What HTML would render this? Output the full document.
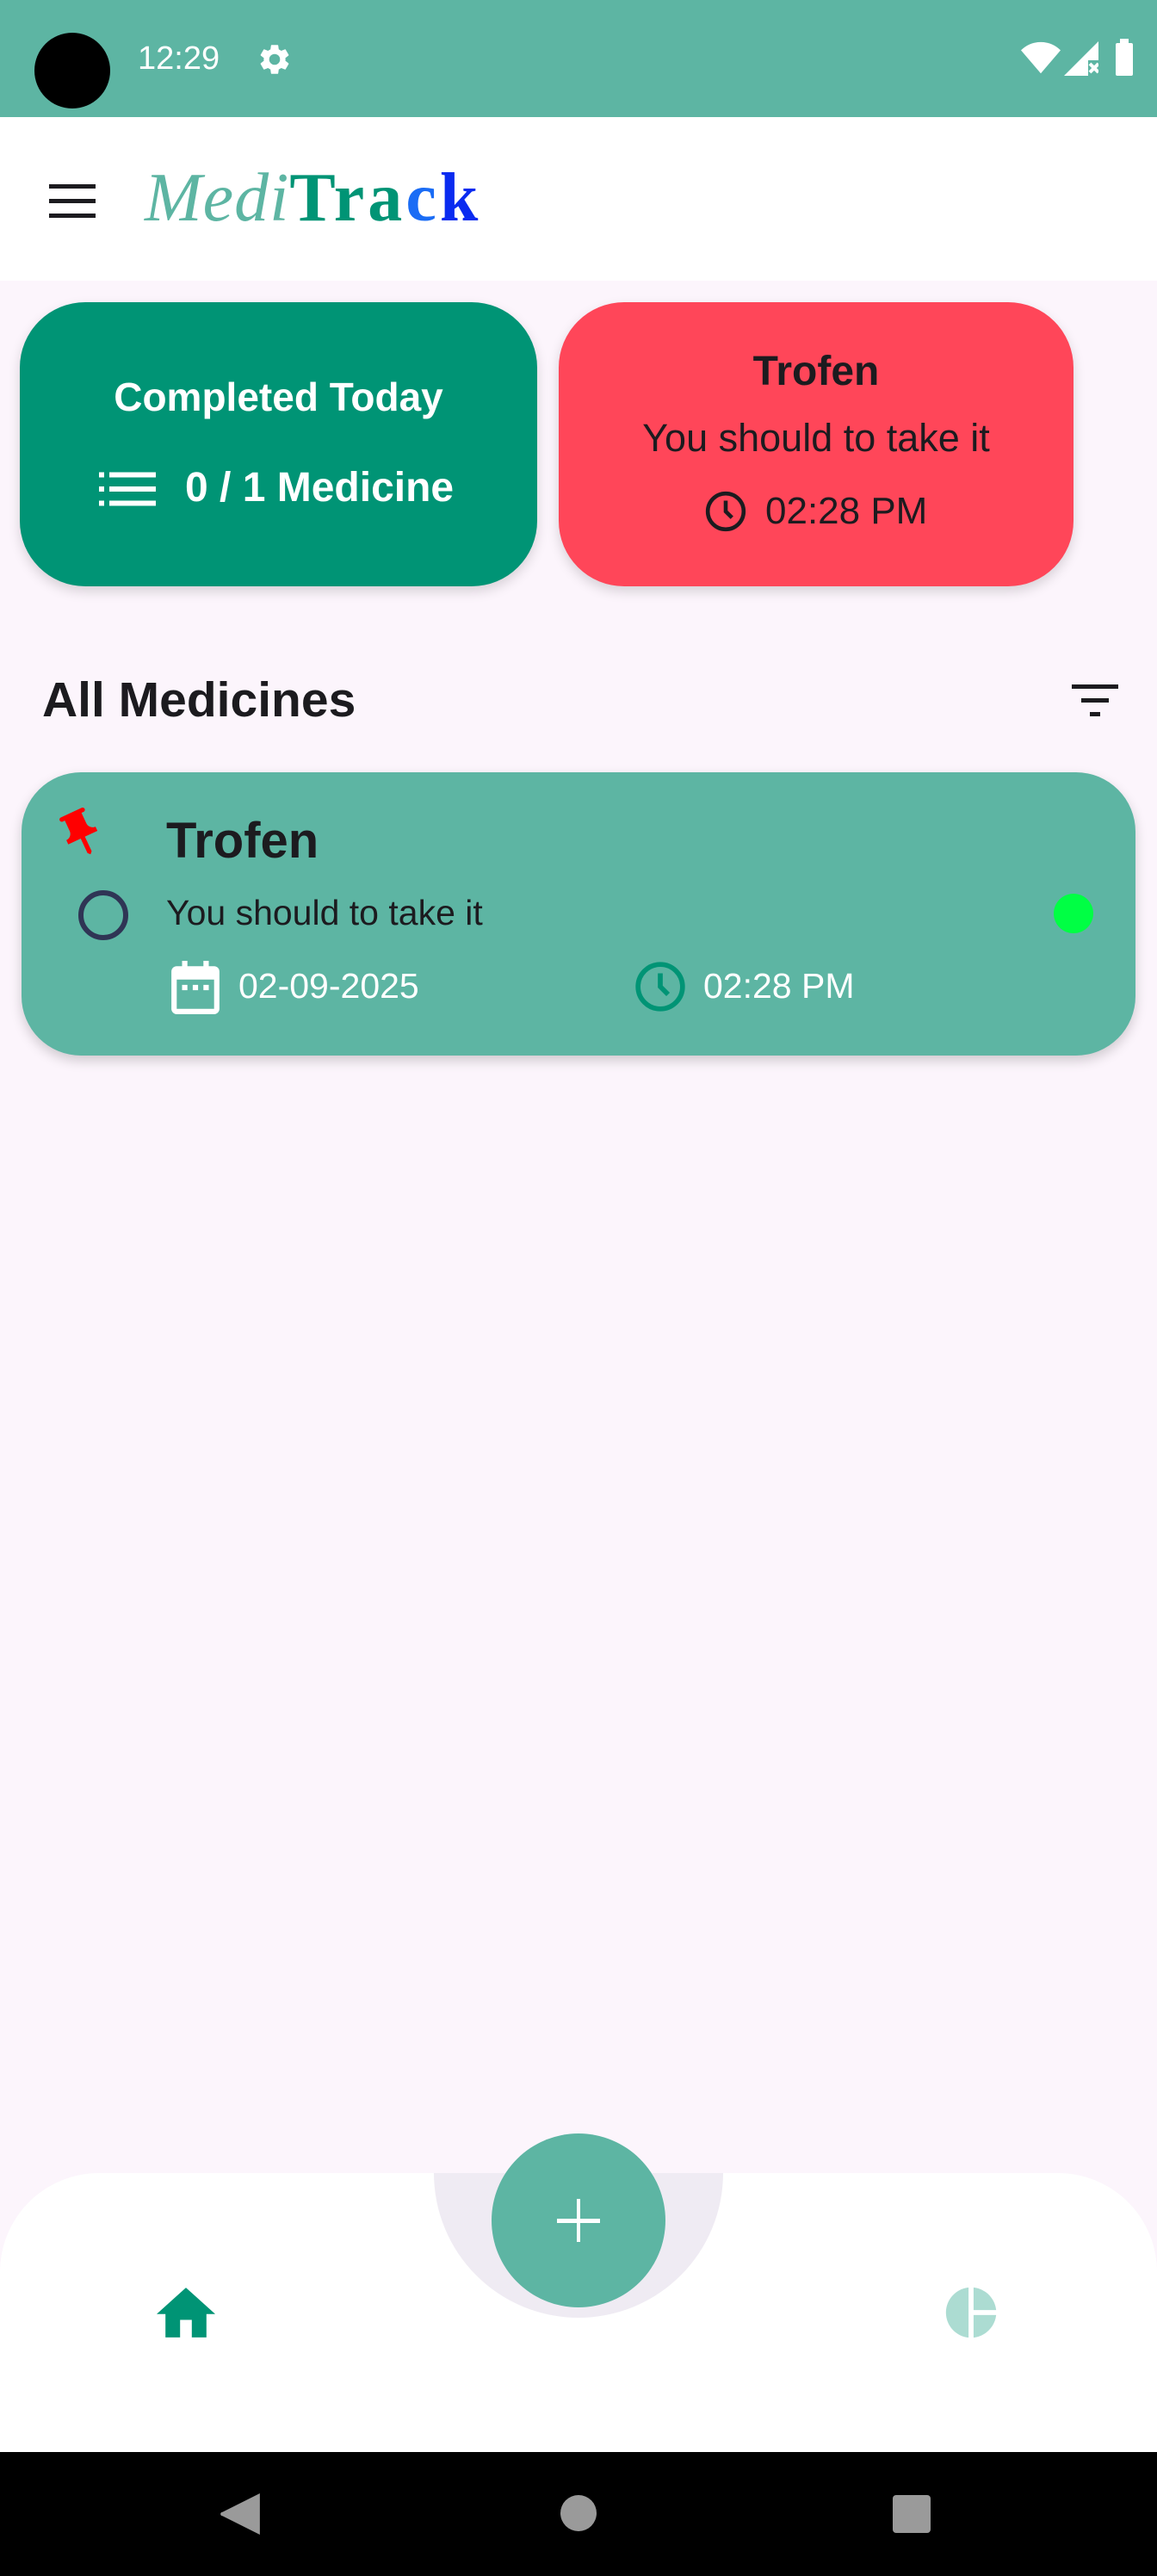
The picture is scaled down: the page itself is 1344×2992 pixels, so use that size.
<!DOCTYPE html>
<html><head><meta charset="utf-8"><style>
*{margin:0;padding:0;box-sizing:border-box}
body{width:1344px;height:2992px;position:relative;background:#fcf5fc;font-family:"Liberation Sans",Roboto,sans-serif;overflow:hidden}
.a{position:absolute}
.t{white-space:nowrap;line-height:1}
</style></head><body>
<!-- status bar -->
<div class="a" style="left:0;top:0;width:1344px;height:136px;background:#5db5a3"></div>
<div class="a" style="left:40px;top:38px;width:88px;height:88px;border-radius:50%;background:#000"></div>
<div class="a t" style="left:160px;top:49px;font-size:38px;color:#fff">12:29</div>
<svg class="a" style="left:298px;top:48px" width="42" height="42" viewBox="0 0 24 24"><path fill="#fff" d="M19.14 12.94c.04-.3.06-.61.06-.94s-.02-.64-.07-.94l2.030-1.58a.49.49 0 0 0 .12-.61l-1.92-3.32a.49.49 0 0 0-.59-.22l-2.39.96c-.5-.38-1.03-.7-1.62-.94L14.4 2.81a.48.48 0 0 0-.48-.41h-3.84a.48.48 0 0 0-.47.41l-.36 2.540c-.59.24-1.13.57-1.620.94l-2.39-.96a.48.48 0 0 0-.59.22L2.74 8.87a.47.47 0 0 0 .12.61l2.03 1.58c-.05.3-.09.63-.09.94s.02.64.07.94l-2.03 1.58a.49.49 0 0 0-.12.61l1.92 3.32c.12.22.37.29.59.22l2.39-.96c.5.38 1.03.7 1.62.94l.36 2.54c.05.24.24.41.48.41h3.84c.24 0 .44-.17.47-.41l.36-2.54c.59-.24 1.13-.56 1.62-.94l2.39.96c.22.08.47 0 .59-.22l1.92-3.32a.47.47 0 0 0-.12-.61l-2.010-1.58zM12 15.6A3.6 3.6 0 1 1 12 8.4a3.6 3.6 0 0 1 0 7.2z"/></svg>
<svg class="a" style="left:1186px;top:48px" width="46" height="40" viewBox="0 0 24 20"><path fill="#fff" d="M12 19 0 5C3 2 7 0 12 0s9 2 12 5z"/></svg>
<svg class="a" style="left:1236px;top:48px" width="40" height="40" viewBox="0 0 20 20"><path fill="#fff" d="M20 0v11h-6v9H0z"/><path stroke="#fff" stroke-width="2" d="M15 13l5 5M20 13l-5 5"/></svg>
<div class="a" style="left:1296px;top:50px;width:20px;height:38px;background:#fff;border-radius:2px"></div>
<div class="a" style="left:1301px;top:45px;width:10px;height:6px;background:#fff"></div>
<!-- header -->
<div class="a" style="left:0;top:136px;width:1344px;height:190px;background:#fff"></div>
<div class="a" style="left:57px;top:214px;width:54px;height:5px;background:#1c1b1f"></div>
<div class="a" style="left:57px;top:231px;width:54px;height:5px;background:#1c1b1f"></div>
<div class="a" style="left:57px;top:248px;width:54px;height:5px;background:#1c1b1f"></div>
<div class="a t" style="left:168px;top:190px;font-size:80px;font-family:'Liberation Serif',serif;letter-spacing:1px"><span style="font-style:italic;color:#5db5a3">Medi</span><span style="font-weight:bold;color:#009475;letter-spacing:4px">Tra</span><span style="font-weight:bold;color:#1a6cf5;letter-spacing:4px">c</span><span style="font-weight:bold;color:#0a2bf0">k</span></div>
<!-- card 1 -->
<div class="a" style="left:23px;top:351px;width:601px;height:330px;border-radius:76px;background:#009475;box-shadow:0 6px 14px rgba(0,0,0,.15)"></div>
<div class="a t" style="left:23px;width:601px;top:438px;text-align:center;font-size:46px;font-weight:bold;color:#fff">Completed Today</div>
<svg class="a" style="left:115px;top:548px" width="66" height="40" viewBox="0 0 22 13"><g fill="#fff"><rect x="0" y="0" width="2" height="2"/><rect x="0" y="5.5" width="2" height="2"/><rect x="0" y="11" width="2" height="2"/><rect x="4" y="0" width="18" height="2"/><rect x="4" y="5.5" width="18" height="2"/><rect x="4" y="11" width="18" height="2"/></g></svg>
<div class="a t" style="left:215px;top:543px;font-size:48px;font-weight:bold;color:#fff">0 / 1 Medicine</div>
<!-- card 2 -->
<div class="a" style="left:649px;top:351px;width:598px;height:330px;border-radius:76px;background:#ff4659;box-shadow:0 6px 14px rgba(0,0,0,.15)"></div>
<div class="a t" style="left:649px;width:598px;top:408px;text-align:center;font-size:48px;font-weight:bold;color:#1c1b1f">Trofen</div>
<div class="a t" style="left:649px;width:598px;top:486px;text-align:center;font-size:45px;color:#1c1b1f">You should to take it</div>
<svg class="a" style="left:818px;top:569px" width="50" height="50" viewBox="0 0 24 24"><circle cx="12" cy="12" r="10" fill="none" stroke="#1c1b1f" stroke-width="2.2"/><path d="M12 6v6l3.5 3.5" fill="none" stroke="#1c1b1f" stroke-width="2.2"/></svg>
<div class="a t" style="left:889px;top:572px;font-size:44px;color:#1c1b1f">02:28 PM</div>
<!-- All medicines -->
<div class="a t" style="left:49px;top:785px;font-size:57px;font-weight:bold;color:#1c1b1f">All Medicines</div>
<div class="a" style="left:1245px;top:795px;width:54px;height:5px;background:#1c1b1f"></div>
<div class="a" style="left:1256px;top:811px;width:32px;height:5px;background:#1c1b1f"></div>
<div class="a" style="left:1266px;top:827px;width:12px;height:5px;background:#1c1b1f"></div>
<!-- list card -->
<div class="a" style="left:25px;top:897px;width:1294px;height:329px;border-radius:69px;background:#5db5a3;box-shadow:0 6px 14px rgba(0,0,0,.18)"></div>
<svg class="a" style="left:62px;top:936px" width="64" height="64" viewBox="0 0 24 24"><g transform="rotate(-25 12 12)"><path fill="#f00" d="M16 9V4h1c.55 0 1-.45 1-1s-.45-1-1-1H7c-.55 0-1 .45-1 1s.45 1 1 1h1v5c0 1.66-1.34 3-3 3v2h5.97v7l1 1 1-1v-7H19v-2c-1.66 0-3-1.34-3-3z"/></g></svg>
<div class="a t" style="left:193px;top:948px;font-size:58px;font-weight:bold;color:#1c1b1f">Trofen</div>
<div class="a" style="left:91px;top:1034px;width:58px;height:58px;border-radius:50%;border:6px solid #2f3555"></div>
<div class="a t" style="left:193px;top:1040px;font-size:41px;color:#1c1b1f">You should to take it</div>
<div class="a" style="left:1224px;top:1038px;width:46px;height:46px;border-radius:50%;background:#00ff44"></div>
<svg class="a" style="left:199px;top:1116px" width="56" height="62" viewBox="0 0 18 20"><path fill="#fff" d="M4 0h2v2h6V0h2v2h2a2 2 0 0 1 2 2v14a2 2 0 0 1-2 2H2a2 2 0 0 1-2-2V4a2 2 0 0 1 2-2h2zM2 7v11h14V7z"/><rect fill="#fff" x="4" y="9" width="2" height="2"/><rect fill="#fff" x="8" y="9" width="2" height="2"/><rect fill="#fff" x="12" y="9" width="2" height="2"/></svg>
<div class="a t" style="left:277px;top:1125px;font-size:41px;color:#fff">02-09-2025</div>
<svg class="a" style="left:736px;top:1115px" width="62" height="62" viewBox="0 0 24 24"><circle cx="12" cy="12" r="10" fill="none" stroke="#009475" stroke-width="2.2"/><path d="M12 6v6l3.5 3.5" fill="none" stroke="#009475" stroke-width="2.2"/></svg>
<div class="a t" style="left:817px;top:1125px;font-size:41px;color:#fff">02:28 PM</div>
<!-- bottom nav -->
<div class="a" style="left:0;top:2524px;width:1344px;height:330px;background:#fff;border-radius:115px 115px 0 0"></div>
<div class="a" style="left:504px;top:2524px;width:336px;height:168px;background:#efebf3;border-radius:0 0 168px 168px"></div>
<div class="a" style="left:571px;top:2478px;width:202px;height:202px;border-radius:50%;background:#5db5a3"></div>
<div class="a" style="left:647px;top:2577px;width:50px;height:5px;background:#fff"></div>
<div class="a" style="left:670px;top:2554px;width:4px;height:50px;background:#fff"></div>
<svg class="a" style="left:182px;top:2656px" width="68" height="60" viewBox="0 0 20 17"><path fill="#009475" d="M10 0 0 9h3v8h5v-6h4v6h5V9h3z"/></svg>
<svg class="a" style="left:1093px;top:2651px" width="70" height="70" viewBox="0 0 24 24"><path fill="#acdcd2" d="M11 2v20C6 21.5 2 17.2 2 12S6 2.5 11 2zM13 2v9h9c-.5-4.7-4.3-8.5-9-9zM13 13v9c4.7-.5 8.5-4.3 9-9z"/></svg>
<!-- system nav -->
<div class="a" style="left:0;top:2848px;width:1344px;height:144px;background:#000"></div>
<svg class="a" style="left:256px;top:2896px" width="46" height="48" viewBox="0 0 20 21"><path fill="#9a9a9a" d="M20 0v21L1 11.5a1 1 0 0 1 0-2z"/></svg>
<div class="a" style="left:651px;top:2898px;width:42px;height:42px;border-radius:50%;background:#9a9a9a"></div>
<div class="a" style="left:1037px;top:2898px;width:44px;height:44px;border-radius:4px;background:#9a9a9a"></div>
</body></html>
